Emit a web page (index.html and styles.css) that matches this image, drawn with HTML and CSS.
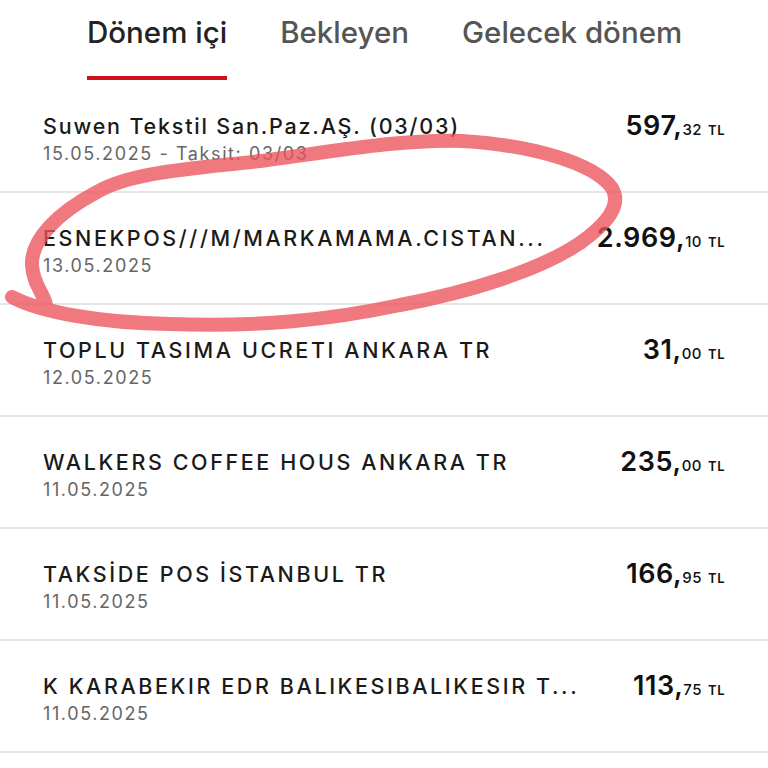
FILE: index.html
```html
<!DOCTYPE html>
<html lang="tr">
<head>
<meta charset="utf-8">
<link rel="stylesheet" href="styles.css">
</head>
<body>
<div class="screen">
  <nav class="tabs">
    <div class="tab active">Dönem içi</div>
    <div class="tab">Bekleyen</div>
    <div class="tab">Gelecek dönem</div>
  </nav>
  <div class="list">
    <div class="row">
      <div class="info"><div class="title">Suwen Tekstil San.Paz.AŞ. (03/03)</div><div class="date">15.05.2025 - Taksit: 03/03</div></div>
      <div class="amt"><span class="int">597,</span><span class="dec">32</span><span class="cur">TL</span></div>
    </div>
    <div class="row">
      <div class="info"><div class="title caps">ESNEKPOS///M/MARKAMAMA.CISTAN...</div><div class="date">13.05.2025</div></div>
      <div class="amt"><span class="int">2.969,</span><span class="dec">10</span><span class="cur">TL</span></div>
    </div>
    <div class="row">
      <div class="info"><div class="title caps">TOPLU TASIMA UCRETI ANKARA TR</div><div class="date">12.05.2025</div></div>
      <div class="amt"><span class="int">31,</span><span class="dec">00</span><span class="cur">TL</span></div>
    </div>
    <div class="row">
      <div class="info"><div class="title caps">WALKERS COFFEE HOUS ANKARA TR</div><div class="date">11.05.2025</div></div>
      <div class="amt"><span class="int">235,</span><span class="dec">00</span><span class="cur">TL</span></div>
    </div>
    <div class="row">
      <div class="info"><div class="title caps">TAKSİDE POS İSTANBUL TR</div><div class="date">11.05.2025</div></div>
      <div class="amt"><span class="int">166,</span><span class="dec">95</span><span class="cur">TL</span></div>
    </div>
    <div class="row">
      <div class="info"><div class="title caps">K KARABEKIR EDR BALIKESIBALIKESIR T...</div><div class="date">11.05.2025</div></div>
      <div class="amt"><span class="int">113,</span><span class="dec">75</span><span class="cur">TL</span></div>
    </div>
  </div>
  <svg class="marker" width="768" height="768" viewBox="0 0 768 768">
    <path d="M 12 297 C 40 312, 100 323, 170 324 C 260 327, 330 320, 400 305 C 470 292, 540 270, 580 243 C 608 223, 622 205, 612 188 C 594 163, 532 145, 462 141 C 400 139, 330 152, 260 161 C 190 169, 132 172, 97 192 C 57 213, 31 240, 32 265 C 33 285, 45 295, 46 305" fill="none" stroke="#ec525b" stroke-width="14" stroke-linecap="round" stroke-linejoin="round" opacity="0.78"/>
  </svg>
</div>
</body>
</html>
```
FILE: styles.css
```css
* { box-sizing: border-box; }
html, body { margin: 0; padding: 0; background: #fff; }
body { font-family: "Inter", "Liberation Sans", sans-serif; color: #1a1a1a; }
.screen { position: relative; width: 768px; height: 768px; overflow: hidden; background: #fff; }
.tabs { display: flex; gap: 53px; padding-left: 87px; height: 81px; }
.tab { font-size: 29.5px; font-weight: 500; color: #555; line-height: 30px; padding-top: 17px; height: 81px; position: relative; }
.tab.active { color: #222; }
.tab.active::after { content: ""; position: absolute; left: 0; right: 0; bottom: 1px; height: 4px; background: #d0101b; }
.list { display: flex; flex-direction: column; }
.row { display: flex; justify-content: space-between; align-items: flex-start; height: 112px; padding: 31px 43px 0 43px; border-bottom: 2px solid #e6e6e6; }
.title { font-size: 21.5px; font-weight: 500; line-height: 28px; color: #1a1a1a; white-space: nowrap; letter-spacing: 1.8px; }
.title.caps { letter-spacing: 2.6px; }
.date { font-size: 18px; font-weight: 400; line-height: 26px; margin-top: 1px; color: #666; letter-spacing: 1.6px; }
.amt { display: flex; align-items: baseline; white-space: nowrap; color: #111; line-height: 32px; margin-top: -2px; }
.int { font-size: 27px; font-weight: 600; letter-spacing: 0.6px; }
.dec { font-size: 15px; font-weight: 500; letter-spacing: 0.5px; }
.cur { font-size: 13px; font-weight: 600; margin-left: 6px; letter-spacing: 0.5px; }
.marker { position: absolute; left: 0; top: 0; pointer-events: none; }
```
